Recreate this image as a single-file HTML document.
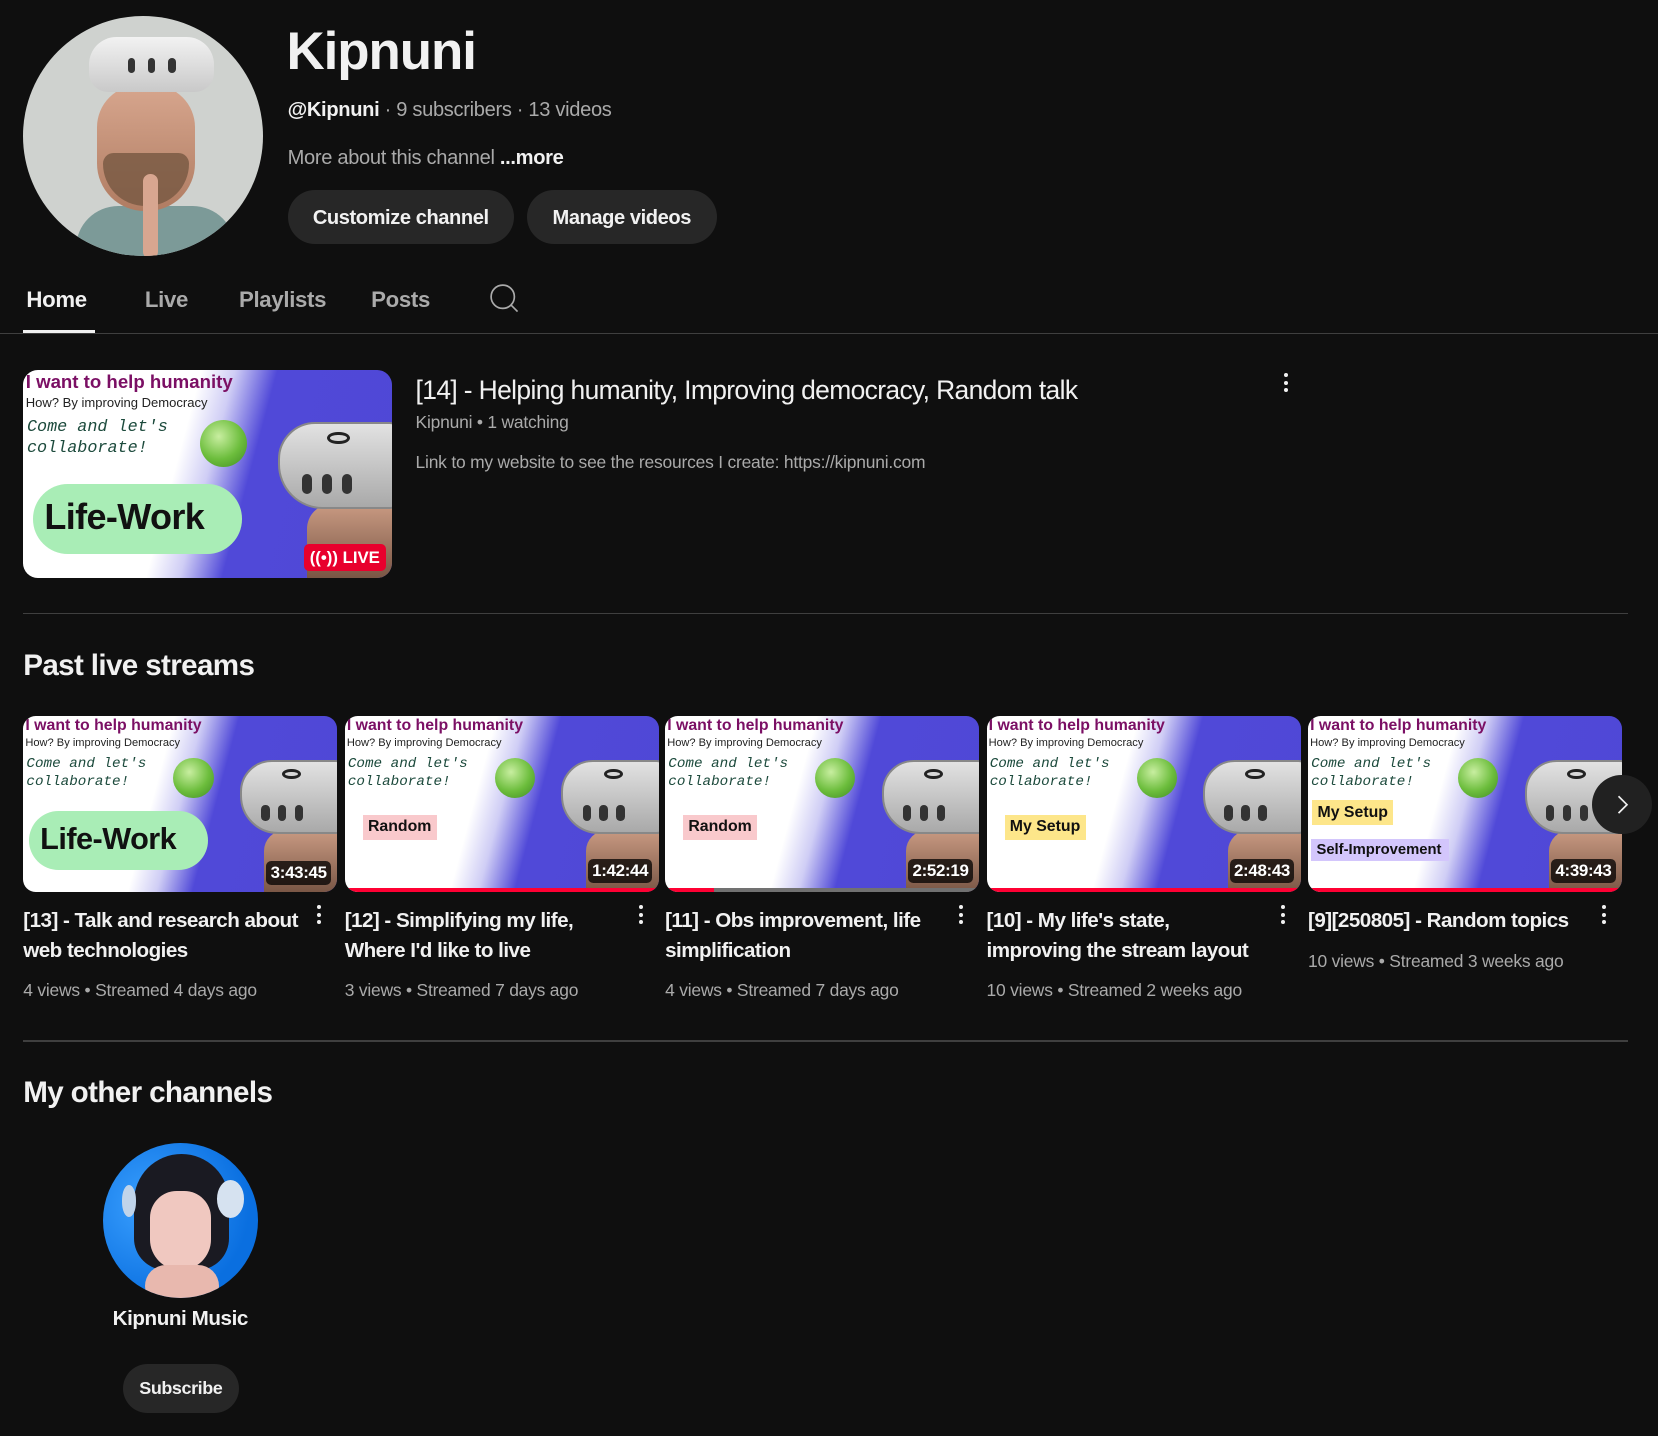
<!DOCTYPE html>
<html><head><meta charset="utf-8">
<style>
*{box-sizing:border-box;margin:0;padding:0}
html,body{background:#0f0f0f;width:1658px;height:1436px;overflow:hidden}
#w{zoom:1.0574;width:1568px;height:1358px;position:relative;font-family:"Liberation Sans",Arial,sans-serif;color:#f1f1f1}
.a{position:absolute}
.btn{position:absolute;background:#272727;border-radius:26px;height:51px;font-size:19px;font-weight:bold;line-height:51px;text-align:center;letter-spacing:-.4px}
.tab{position:absolute;top:270px;font-size:21px;font-weight:bold;color:#aaa;letter-spacing:-.3px}
.hr{position:absolute;left:22px;width:1518px;height:1px;background:#3f3f3f}
.th{position:absolute;width:297px;height:167px;border-radius:12px;overflow:hidden;background:linear-gradient(105deg,#fff 0%,#fff 42%,#cfcdf5 50%,#5049d8 60%,#4f48d6 100%)}
.th .t1{position:absolute;left:2px;top:1px;font-size:15px;font-weight:bold;color:#7b0f64;white-space:nowrap}
.th .t2{position:absolute;left:2px;top:20px;font-size:10.5px;color:#222;white-space:nowrap}
.th .t3{position:absolute;left:3px;top:38px;font-family:"Liberation Mono",monospace;font-style:italic;font-size:13.5px;line-height:17px;color:#1c4a3c;white-space:nowrap}
.th .globe{position:absolute;left:142px;top:40px;width:38px;height:38px;border-radius:50%;background:radial-gradient(circle at 40% 35%,#c8eea0,#6cbd3c 55%,#3e8a22)}
.th .hs{position:absolute;left:205px;top:42px;width:100px;height:70px;border-radius:30px 10px 10px 36px;background:linear-gradient(#e2e2e2,#a9a9a9);border:2px solid #888}
.th .hs i{position:absolute;top:40px;width:8px;height:16px;border-radius:4px;background:#333}
.th .face{position:absolute;left:228px;top:108px;width:80px;height:70px;background:linear-gradient(#c99a82,#6b4a3a);border-radius:20px 0 0 0}
.th .hs b{position:absolute;left:38px;top:6px;width:18px;height:10px;border:3px solid #222;border-radius:50%}
.lab{position:absolute;left:17px;font-size:15px;font-weight:bold;color:#111;padding:3px 5px;white-space:nowrap}
.dur{position:absolute;right:6px;bottom:7px;background:rgba(0,0,0,.75);color:#fff;font-size:16px;font-weight:bold;padding:2px 4px;border-radius:5px;letter-spacing:-.3px}
.pb{position:absolute;left:0;bottom:0;height:4px;background:#ff0033}
.ct{position:absolute;font-size:19.5px;font-weight:bold;line-height:28px;width:265px;letter-spacing:-.5px}
.cm{position:absolute;font-size:16.5px;color:#aaa;white-space:nowrap;letter-spacing:-.2px}
.dots{position:absolute;width:4px}
.dots i{display:block;width:4px;height:4px;border-radius:2px;background:#f1f1f1;margin-bottom:3px}
</style></head><body><div id="w">

<div class="a" style="left:22px;top:15px;width:227px;height:227px;border-radius:50%;overflow:hidden;background:#cfd2cf">
 <div class="a" style="left:50px;top:180px;width:150px;height:80px;background:#7c9a98;border-radius:40px 40px 0 0"></div>
 <div class="a" style="left:70px;top:65px;width:92px;height:120px;background:linear-gradient(#d7a68e,#b07c62);border-radius:40px 40px 45px 45px"></div>
 <div class="a" style="left:75px;top:130px;width:82px;height:50px;background:#7a5a44;border-radius:10px 10px 40px 40px;opacity:.85"></div>
 <div class="a" style="left:113px;top:150px;width:14px;height:80px;background:#d8a690;border-radius:7px"></div>
 <div class="a" style="left:62px;top:20px;width:118px;height:52px;background:linear-gradient(#f2f2f2,#c9c9c9);border-radius:26px 26px 18px 18px"></div>
 <i class="a" style="left:99px;top:40px;width:7px;height:14px;background:#333;border-radius:4px"></i>
 <i class="a" style="left:118px;top:40px;width:7px;height:14px;background:#333;border-radius:4px"></i>
 <i class="a" style="left:137px;top:40px;width:7px;height:14px;background:#333;border-radius:4px"></i>
</div>

<div class="a" style="left:271px;top:20px;font-size:50px;font-weight:bold;letter-spacing:-1px">Kipnuni</div>
<div class="a" style="left:272px;top:94px;font-size:19px;color:#aaa;letter-spacing:-.3px"><b style="color:#f1f1f1">@Kipnuni</b> · 9 subscribers · 13 videos</div>
<div class="a" style="left:272px;top:139px;font-size:19px;color:#aaa;letter-spacing:-.3px">More about this channel <b style="color:#f1f1f1">...more</b></div>
<div class="btn" style="left:272px;top:180px;width:214px;line-height:53px">Customize channel</div>
<div class="btn" style="left:498px;top:180px;width:180px;line-height:53px">Manage videos</div>

<div class="tab" style="left:25px;color:#f1f1f1;top:271px">Home</div>
<div class="tab" style="left:137px;top:271px">Live</div>
<div class="tab" style="left:226px;top:271px">Playlists</div>
<div class="tab" style="left:351px;top:271px">Posts</div>
<svg class="a" style="left:462px;top:268px" width="30" height="30" viewBox="0 0 30 30"><circle cx="13" cy="13" r="11" fill="none" stroke="#aaa" stroke-width="1.6"/><line x1="21" y1="21" x2="27" y2="27" stroke="#aaa" stroke-width="1.6"/></svg>
<div class="a" style="left:22px;top:312px;width:68px;height:3px;background:#f1f1f1"></div>
<div class="a" style="left:0;top:315px;width:1568px;height:1px;background:#3f3f3f"></div>

<div class="a" style="left:22px;top:350px;width:349px;height:196px">
<div style="position:relative;width:297px;height:167px;zoom:1.175">
 <div class="th" style="left:0;top:0">
  <div class="t1">I want to help humanity</div><div class="t2">How? By improving Democracy</div>
  <div class="t3">Come and let's<br>collaborate!</div><div class="globe"></div>
  <div class="face"></div><div class="hs"><b></b><i style="left:18px"></i><i style="left:34px"></i><i style="left:50px"></i></div>
  <div class="a" style="left:8px;top:92px;width:168px;height:56px;background:#a9edb6;border-radius:28px;"></div>
  <div class="a" style="left:17px;top:101px;font-size:29px;font-weight:bold;color:#111;letter-spacing:-.5px">Life-Work</div>
  <div class="a" style="right:5px;bottom:5px;background:#e8002d;color:#fff;font-size:13.5px;font-weight:bold;padding:3px 5px;border-radius:4px">((•)) LIVE</div>
 </div>
</div></div>
<div class="a" style="left:393px;top:355px;font-size:25px;letter-spacing:-.6px">[14] - Helping humanity, Improving democracy, Random talk</div>
<div class="a" style="left:393px;top:390px;font-size:16.5px;color:#aaa;letter-spacing:-.2px">Kipnuni • 1 watching</div>
<div class="a" style="left:393px;top:427px;font-size:16.5px;color:#aaa;letter-spacing:-.2px">Link to my website to see the resources I create: https://kipnuni.com</div>
<div class="dots" style="left:1214px;top:353px"><i></i><i></i><i></i></div>

<div class="hr" style="top:580px"></div>
<div class="a" style="left:22px;top:614px;font-size:28px;font-weight:bold;letter-spacing:-.6px">Past live streams</div>

<div class="th" style="left:22px;top:677px">
 <div class="t1">I want to help humanity</div><div class="t2">How? By improving Democracy</div><div class="t3">Come and let's<br>collaborate!</div><div class="globe"></div>
 <div class="face"></div><div class="hs"><b></b><i style="left:18px"></i><i style="left:34px"></i><i style="left:50px"></i></div>
 <div class="a" style="left:5px;top:90px;width:170px;height:56px;background:#a9edb6;border-radius:28px"></div>
 <div class="a" style="left:16px;top:100px;font-size:29px;font-weight:bold;color:#111;letter-spacing:-.5px">Life-Work</div>
 <div class="dur">3:43:45</div>
</div>
<div class="th" style="left:326px;top:677px">
 <div class="t1">I want to help humanity</div><div class="t2">How? By improving Democracy</div><div class="t3">Come and let's<br>collaborate!</div><div class="globe"></div>
 <div class="face"></div><div class="hs"><b></b><i style="left:18px"></i><i style="left:34px"></i><i style="left:50px"></i></div>
 <div class="lab" style="top:94px;background:#f9c9cc">Random</div>
 <div class="dur" style="bottom:9px">1:42:44</div><div class="pb" style="width:100%"></div>
</div>
<div class="th" style="left:629px;top:677px">
 <div class="t1">I want to help humanity</div><div class="t2">How? By improving Democracy</div><div class="t3">Come and let's<br>collaborate!</div><div class="globe"></div>
 <div class="face"></div><div class="hs"><b></b><i style="left:18px"></i><i style="left:34px"></i><i style="left:50px"></i></div>
 <div class="lab" style="top:94px;background:#f9c9cc">Random</div>
 <div class="dur" style="bottom:9px">2:52:19</div><div class="pb" style="width:100%;background:#717171"></div><div class="pb" style="width:46px"></div>
</div>
<div class="th" style="left:933px;top:677px">
 <div class="t1">I want to help humanity</div><div class="t2">How? By improving Democracy</div><div class="t3">Come and let's<br>collaborate!</div><div class="globe"></div>
 <div class="face"></div><div class="hs"><b></b><i style="left:18px"></i><i style="left:34px"></i><i style="left:50px"></i></div>
 <div class="lab" style="top:94px;background:#fde68a">My Setup</div>
 <div class="dur" style="bottom:9px">2:48:43</div><div class="pb" style="width:100%"></div>
</div>
<div class="th" style="left:1237px;top:677px">
 <div class="t1">I want to help humanity</div><div class="t2">How? By improving Democracy</div><div class="t3">Come and let's<br>collaborate!</div><div class="globe"></div>
 <div class="face"></div><div class="hs"><b></b><i style="left:18px"></i><i style="left:34px"></i><i style="left:50px"></i></div>
 <div class="lab" style="left:4px;top:80px;background:#fde68a">My Setup</div>
 <div class="lab" style="left:3px;top:116px;background:#d3c6fc;font-size:14px;padding:3px 7px 3px 5px">Self-Improvement</div>
 <div class="dur" style="bottom:9px">4:39:43</div><div class="pb" style="width:100%"></div>
</div>
<div class="a" style="left:1506px;top:733px;width:56px;height:56px;border-radius:50%;background:#212121"></div>
<svg class="a" style="left:1522px;top:749px" width="24" height="24" viewBox="0 0 24 24"><path d="M9 4l8 8-8 8" fill="none" stroke="#f1f1f1" stroke-width="1.6"/></svg>

<div class="ct" style="left:22px;top:857px;width:275px">[13] - Talk and research about web technologies</div>
<div class="dots" style="left:300px;top:856px"><i></i><i></i><i></i></div>
<div class="cm" style="left:22px;top:927px">4 views • Streamed 4 days ago</div>
<div class="ct" style="left:326px;top:857px">[12] - Simplifying my life, Where I'd like to live</div>
<div class="dots" style="left:604px;top:856px"><i></i><i></i><i></i></div>
<div class="cm" style="left:326px;top:927px">3 views • Streamed 7 days ago</div>
<div class="ct" style="left:629px;top:857px">[11] - Obs improvement, life simplification</div>
<div class="dots" style="left:907px;top:856px"><i></i><i></i><i></i></div>
<div class="cm" style="left:629px;top:927px">4 views • Streamed 7 days ago</div>
<div class="ct" style="left:933px;top:857px">[10] - My life's state, improving the stream layout</div>
<div class="dots" style="left:1211px;top:856px"><i></i><i></i><i></i></div>
<div class="cm" style="left:933px;top:927px">10 views • Streamed 2 weeks ago</div>
<div class="ct" style="left:1237px;top:857px">[9][250805] - Random topics</div>
<div class="dots" style="left:1515px;top:856px"><i></i><i></i><i></i></div>
<div class="cm" style="left:1237px;top:899px">10 views • Streamed 3 weeks ago</div>

<div class="hr" style="top:984px"></div>
<div class="a" style="left:22px;top:1018px;font-size:28px;font-weight:bold;letter-spacing:-.6px">My other channels</div>

<div class="a" style="left:97px;top:1081px;width:147px;height:147px;border-radius:50%;overflow:hidden;background:radial-gradient(circle at 30% 40%,#3aa0ff,#0a6fe0 70%)">
 <div class="a" style="left:30px;top:10px;width:90px;height:110px;background:#1a1a22;border-radius:45px 45px 30px 30px"></div>
 <div class="a" style="left:45px;top:45px;width:58px;height:75px;background:#f0c8c0;border-radius:28px 28px 32px 32px"></div>
 <div class="a" style="left:40px;top:115px;width:70px;height:40px;background:#e8b8ae;border-radius:20px"></div>
 <div class="a" style="left:108px;top:35px;width:26px;height:36px;background:#d6e2f0;border-radius:50%"></div>
 <div class="a" style="left:18px;top:40px;width:14px;height:30px;background:#c0d4ea;border-radius:50%"></div>
</div>
<div class="a" style="left:97px;top:1236px;width:147px;text-align:center;font-size:19.5px;font-weight:bold;letter-spacing:-.4px">Kipnuni Music</div>
<div class="btn" style="left:116px;top:1290px;width:110px;height:46px;line-height:46px;font-size:17px">Subscribe</div>

</div></body></html>
